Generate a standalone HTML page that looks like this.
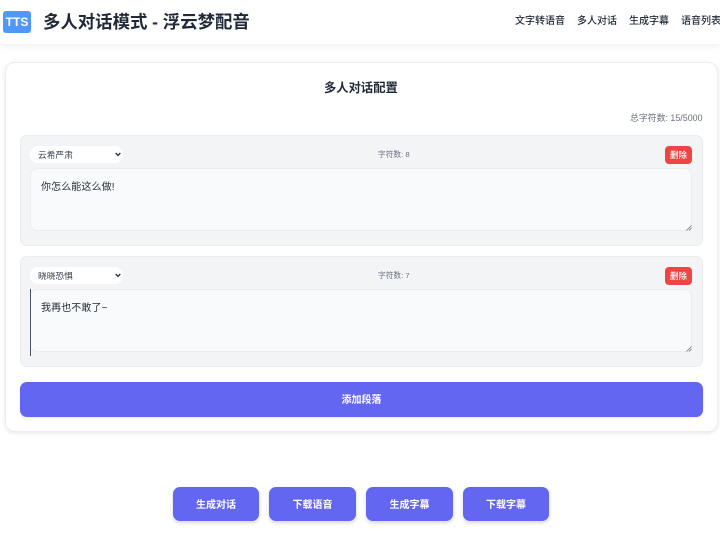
<!DOCTYPE html>
<html lang="zh">
<head>
<meta charset="utf-8">
<title>多人对话模式 - 浮云梦配音</title>
<style>
*{box-sizing:border-box;margin:0;padding:0}
html,body{width:720px;height:543px;overflow:hidden;background:#fff}
body{font-family:"Liberation Sans","Noto Sans CJK SC",sans-serif;color:#1f2937;position:relative}
.abs{position:absolute}
.t{position:absolute;white-space:nowrap;line-height:1}
.header{left:0;top:0;width:720px;height:44px;background:#fff;box-shadow:0 2px 8px rgba(0,0,0,.07)}
.logo{left:3px;top:11px;width:28px;height:22px;background:#4f98fb;border-radius:3px;color:#fff;font-weight:700;font-size:12px;line-height:22px;text-align:center}
.nav{top:17px;font-size:10px;font-weight:500;color:#1f2937}
.card{left:5px;top:62px;width:713px;height:370px;background:#fff;border:1px solid #eceef1;border-radius:10px;box-shadow:0 1px 4px rgba(0,0,0,.1)}
.item{left:20px;width:683px;height:111px;background:#f3f4f6;border:1px solid #e9ebee;border-radius:7px}
.select{left:30px;width:93px;height:17px;background:#fff;border-radius:8px;font-size:8.7px;color:#374151;line-height:18px;padding-left:8px}
.area{left:30px;width:662px;height:63px;background:#f9fafb;border:1px solid #eaecef;border-radius:7px;font-size:10px;color:#1f2937;padding:13px 10px;line-height:12px;letter-spacing:.1px}
.del{left:665px;width:27px;height:18px;background:#ef4444;border-radius:4px;color:#fff;font-size:8.5px;text-align:center;line-height:18px;font-weight:500}
.count{font-size:7.7px;color:#6b7280;left:378px}
.add{left:20px;top:382px;width:683px;height:35px;background:#6366f1;border-radius:7px;color:#fff;font-weight:700;font-size:10px;text-align:center;line-height:37px;box-shadow:0 1px 2px rgba(0,0,0,.1)}
.btn{top:487px;height:34px;background:#6366f1;border-radius:7px;color:#fff;font-weight:700;font-size:10px;text-align:center;line-height:37px;box-shadow:0 2px 4px rgba(0,0,0,.16)}
</style>
</head>
<body>
<div class="abs header"></div>
<div class="abs logo">TTS</div>
<div class="t" style="left:43px;top:14px;font-size:17.4px;font-weight:700;color:#1f2937">多人对话模式 - 浮云梦配音</div>
<div class="t nav" style="left:515px">文字转语音</div>
<div class="t nav" style="left:577px">多人对话</div>
<div class="t nav" style="left:629px">生成字幕</div>
<div class="t nav" style="left:681px">语音列表</div>

<div class="abs card"></div>
<div class="t" style="left:324px;top:82px;font-size:12.3px;font-weight:700;color:#1f2937">多人对话配置</div>
<div class="t" style="left:630px;top:114px;font-size:8.9px;color:#6b7280">总字符数: 15/5000</div>

<div class="abs item" style="top:135px"></div>
<div class="abs select" style="top:146px">云希严肃</div>
<svg class="abs" style="left:115px;top:152px" width="6" height="5" viewBox="0 0 6 5"><path d="M.7 1 3 3.4 5.3 1" fill="none" stroke="#1f2937" stroke-width="1.3"/></svg>
<div class="t count" style="top:151px">字符数: 8</div>
<div class="abs del" style="top:146px">删除</div>
<div class="abs area" style="top:168px">你怎么能这么做!</div>
<svg class="abs" style="left:686px;top:225px" width="6" height="6" viewBox="0 0 6 6"><path d="M.5 5.5 5.5.5M3 5.5 5.5 3" stroke="#777" stroke-width=".8"/></svg>

<div class="abs item" style="top:256px"></div>
<div class="abs select" style="top:267px">晓晓恐惧</div>
<svg class="abs" style="left:115px;top:273px" width="6" height="5" viewBox="0 0 6 5"><path d="M.7 1 3 3.4 5.3 1" fill="none" stroke="#1f2937" stroke-width="1.3"/></svg>
<div class="t count" style="top:272px">字符数: 7</div>
<div class="abs del" style="top:267px">删除</div>
<div class="abs area" style="top:289px">我再也不敢了~</div>
<div class="abs" style="left:30px;top:289px;width:1px;height:67px;background:#4b5563"></div>
<svg class="abs" style="left:686px;top:346px" width="6" height="6" viewBox="0 0 6 6"><path d="M.5 5.5 5.5.5M3 5.5 5.5 3" stroke="#777" stroke-width=".8"/></svg>

<div class="abs add">添加段落</div>

<div class="abs btn" style="left:173px;width:86px">生成对话</div>
<div class="abs btn" style="left:269px;width:87px">下载语音</div>
<div class="abs btn" style="left:366px;width:87px">生成字幕</div>
<div class="abs btn" style="left:463px;width:86px">下载字幕</div>
</body>
</html>
